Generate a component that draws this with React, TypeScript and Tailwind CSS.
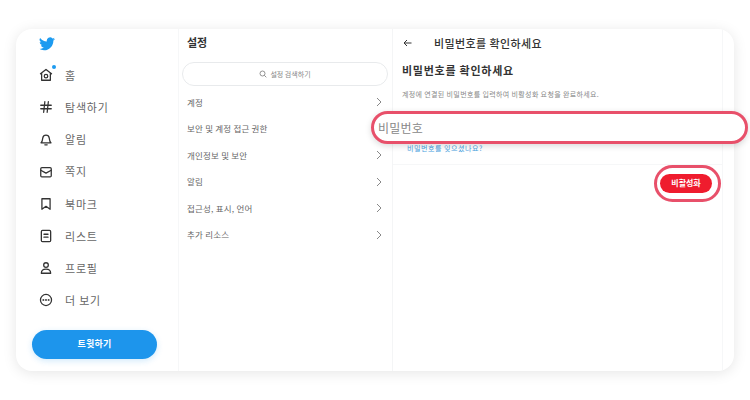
import React from "react";

const font = { fontFamily: '"Noto Sans CJK KR", "Liberation Sans", sans-serif' };

const s = { width: 14, height: 14, viewBox: "0 0 24 24", fill: "none", stroke: "#333", strokeWidth: 2.2, strokeLinecap: "round" as const, strokeLinejoin: "round" as const };

const icons: Record<string, React.ReactNode> = {
  home: (
    <svg {...s}>
      <path d="M2.5 10 12 2.5l9.5 7.5M4.5 8.5V21h15V8.5" />
      <circle cx="12" cy="14" r="3" />
    </svg>
  ),
  hash: (
    <svg {...s}>
      <path d="M3 9h18M3 15h18M10 3 8 21M16 3l-2 18" />
    </svg>
  ),
  bell: (
    <svg {...s}>
      <path d="M3.5 18.5c2.5-2 2.5-5 3-8.5a5.6 5.6 0 0 1 11 0c.5 3.500.5 6.500 3 8.500z" />
      <path d="M10 22h4" />
    </svg>
  ),
  mail: (
    <svg {...s}>
      <rect x="3" y="4.500" width="18" height="16" rx="2" />
      <path d="m3 9 9 5 9-5" />
    </svg>
  ),
  bookmark: (
    <svg {...s}>
      <path d="M5 3h14v18l-7-5-7 5z" />
    </svg>
  ),
  list: (
    <svg {...s}>
      <rect x="4" y="2.500" width="16" height="19" rx="2" />
      <path d="M8.500 9h7M8.500 14h7" />
    </svg>
  ),
  user: (
    <svg {...s}>
      <circle cx="12" cy="7" r="4" />
      <path d="M4 21c0-5 3-7 8-7s8 2 8 7z" />
    </svg>
  ),
  more: (
    <svg {...s}>
      <circle cx="12" cy="12" r="9.500" />
      <circle cx="7.500" cy="12" r="0.600" />
      <circle cx="12" cy="12" r="0.600" />
      <circle cx="16.500" cy="12" r="0.600" />
    </svg>
  ),
};

const nav = [
  ["home", "홈"],
  ["hash", "탐색하기"],
  ["bell", "알림"],
  ["mail", "쪽지"],
  ["bookmark", "북마크"],
  ["list", "리스트"],
  ["user", "프로필"],
  ["more", "더 보기"],
];

const settings = [
  ["계정", true],
  ["보안 및 계정 접근 권한", false],
  ["개인정보 및 보안", true],
  ["알림", true],
  ["접근성, 표시, 언어", true],
  ["추가 리소스", true],
] as const;

export default function App() {
  return (
    <div className="w-[750px] h-[400px] bg-white pt-[29px] pl-4 overflow-hidden relative" style={font}>
      <div className="w-[718px] h-[342px] bg-white rounded-2xl shadow-[0_2px_14px_rgba(0,0,0,0.10)] flex overflow-hidden">
        <div className="w-[163px] shrink-0 border-r border-[#f6f7f8] flex flex-col">
          <svg width="16" height="14" viewBox="0 0 24 20" className="ml-[23px] mt-[8px]">
            <path fill="#1d9bf0" d="M24 2.400a9.800 9.800 0 0 1-2.800.800A4.900 4.900 0 0 0 23.300.500a9.800 9.800 0 0 1-3.100 1.200 4.900 4.900 0 0 0-8.400 4.500A14 14 0 0 1 1.700.900a4.900 4.900 0 0 0 1.500 6.600 4.900 4.900 0 0 1-2.200-.600 4.900 4.900 0 0 0 3.900 4.900 4.900 4.900 0 0 1-2.200.100 4.900 4.900 0 0 0 4.600 3.400A9.900 9.900 0 0 1 0 17.300 14 14 0 0 0 7.500 19.500c9.100 0 14.300-7.700 14-14.600A10 10 0 0 0 24 2.400z" />
          </svg>
          <div className="flex flex-col mt-[8px]">
            {nav.map(([icon, label]) => (
              <div key={label} className="h-[32.2px] flex items-center pl-[23px] gap-[12px]">
                <span className="relative w-[14px] h-[14px] flex">
                  {icons[icon]}
                  {icon === "home" && <span className="absolute -top-[3px] right-[-3px] w-[4px] h-[4px] rounded-full bg-[#1d9bf0]" />}
                </span>
                <span className="text-[11px] tracking-[0.8px] text-[#666]">{label}</span>
              </div>
            ))}
          </div>
          <div className="ml-4 w-[125px] mt-[13px] h-[29px] rounded-full bg-[#1d95ec] flex items-center justify-center text-white text-[9px] font-bold tracking-[0.2px] shadow-[0_2px_6px_rgba(29,149,236,0.2)]">
            트윗하기
          </div>
        </div>

        <div className="w-[214px] shrink-0 border-r border-[#f4f5f6] flex flex-col">
          <div className="pl-[8px] pt-[5px] h-[33px] text-[11px] font-bold text-[#333]">설정</div>
          <div className="ml-[3px] w-[206px] h-[24px] rounded-full border border-[#e8eaec] flex items-center justify-center gap-[3px] text-[7px] text-[#888]">
            <svg width="8" height="8" viewBox="0 0 24 24" fill="none" stroke="#777" strokeWidth="2.400">
              <circle cx="10.500" cy="10.500" r="7.500" />
              <path d="m16 16 6 6" />
            </svg>
            설정 검색하기
          </div>
          <div className="flex flex-col mt-[3px]">
            {settings.map(([label, chev]) => (
              <div key={label} className="h-[26.5px] flex items-center justify-between pl-[8px] pr-[10px] text-[8.5px] tracking-[0.2px] text-[#666]">
                <span>{label}</span>
                {chev && (
                  <svg width="6" height="10" viewBox="0 0 6 10" fill="none" stroke="#888" strokeWidth="1">
                    <path d="m1 1 4 4-4 4" />
                  </svg>
                )}
              </div>
            ))}
          </div>
        </div>

        <div className="w-[330px] shrink-0 border-r border-[#f6f7f8] flex flex-col">
          <div className="h-[28px] flex items-center pl-[10px] gap-[22px] text-[11px] font-medium text-[#333] tracking-[0.4px]">
            <svg width="9" height="8" viewBox="0 0 9 8" fill="none" stroke="#333" strokeWidth="1">
              <path d="M8.500 4H1M4 1 1 4l3 3" />
            </svg>
            비밀번호를 확인하세요
          </div>
          <div className="pl-[9px] mt-[5px] text-[11px] font-bold text-[#333] tracking-[0.75px]">비밀번호를 확인하세요</div>
          <div className="pl-[9px] mt-[10px] text-[7px] tracking-[0.35px] text-[#888]">계정에 연결된 비밀번호를 입력하여 비활성화 요청을 완료하세요.</div>
          <div className="pl-[14px] mt-[44px] pb-[10px] border-b border-[#f6f7f8] text-[7px] tracking-[0.55px] text-[#4aa3df]">비밀번호를 잊으셨나요?</div>
          <div className="flex justify-end pr-[10px] pt-[9px]">
            <div className="w-[52px] h-[19px] rounded-full bg-[#ef1c2e] text-white text-[8px] font-bold flex items-center justify-center">비활성화</div>
          </div>
        </div>
      </div>

      <div className="absolute left-[371px] top-[111px] w-[377px] h-[33px] rounded-full border-[3px] border-[#e8506a] bg-white flex items-center pl-[4px] text-[12px] text-[#888] tracking-[0.2px] shadow-[0_2px_6px_rgba(0,0,0,0.15)]">
        비밀번호
      </div>
      <div className="absolute left-[654px] top-[165px] w-[67px] h-[37px] rounded-full border-[3px] border-[#e8506a]" />
    </div>
  );
}
